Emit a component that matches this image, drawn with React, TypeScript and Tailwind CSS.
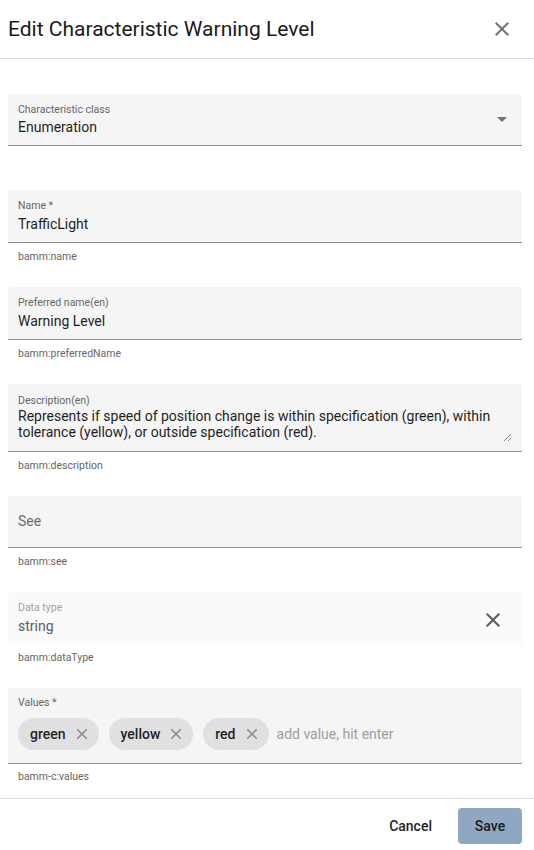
const CloseIcon = ({ className }: { className?: string }) => (
  <svg viewBox="0 0 24 24" className={className} fill="currentColor">
    <path d="M19 6.41 17.59 5 12 10.59 6.41 5 5 6.41 10.59 12 5 17.59 6.41 19 12 13.41 17.59 19 19 17.59 13.41 12z" />
  </svg>
)

function Hint({ text }: { text?: string }) {
  return (
    <div className="h-[44px] px-[10px] pt-[7px] text-[10.5px] leading-[14px] text-[#666]">
      {text}
    </div>
  )
}

function TextField({ label, value, hint }: { label: string; value: string; hint?: string }) {
  return (
    <div>
      <div className="h-[53px] rounded-t bg-[#f5f5f5] border-b border-[#8f8f8f] px-[10px] pt-[9px]">
        <div className="text-[10.5px] leading-[14px] text-[#666]">{label}</div>
        <div className="mt-[2px] text-[14px] leading-[18px] text-[#1f1f1f]">{value}</div>
      </div>
      <Hint text={hint} />
    </div>
  )
}

const chips = ["green", "yellow", "red"]

export default function App() {
  return (
    <div className="w-[534px] h-[850px] bg-white flex flex-col font-['Roboto',sans-serif] text-[#1f1f1f]">
      <div className="h-[59px] shrink-0 border-b border-[#dadada] flex items-center justify-between pl-2 pr-[20px]">
        <h1 className="text-[21px] leading-[24px] text-[#1a1a1a]">Edit Characteristic Warning Level</h1>
        <CloseIcon className="w-6 h-6 text-[#737373]" />
      </div>

      <div className="flex-1 pl-2 pr-3 pt-[35px]">
        {/* characteristic class select */}
        <div className="mb-[44px]">
          <div className="h-[52px] rounded-t bg-[#f5f5f5] border-b border-[#8f8f8f] px-[10px] pt-[9px] flex items-start justify-between">
            <div>
              <div className="text-[10.5px] leading-[14px] text-[#666]">Characteristic class</div>
              <div className="mt-[1px] text-[14px] leading-[18px]">Enumeration</div>
            </div>
            <svg viewBox="0 0 10 5" className="w-[10px] h-[5px] mt-[14px] mr-[5px] text-[#737373]" fill="currentColor">
              <path d="M0 0h10L5 5z" />
            </svg>
          </div>
        </div>

        <TextField label="Name *" value="TrafficLight" hint="bamm:name" />
        <TextField label="Preferred name(en)" value="Warning Level" hint="bamm:preferredName" />

        {/* description */}
        <div>
          <div className="relative h-[68px] rounded-t bg-[#f5f5f5] border-b border-[#8f8f8f] px-[10px] pt-[10px]">
            <div className="text-[10.5px] leading-[14px] text-[#666]">Description(en)</div>
            <div className="mt-[1px] text-[14px] leading-[15.75px] pr-2">
              Represents if speed of position change is within specification (green), within tolerance (yellow), or outside specification (red).
            </div>
            <svg viewBox="0 0 8 8" className="absolute right-[11px] bottom-[10px] w-[8px] h-[8px] text-[#777]" stroke="currentColor" strokeWidth="0.9">
              <path d="M1 8 8 1M5 8 8 5" />
            </svg>
          </div>
          <Hint text="bamm:description" />
        </div>

        {/* see */}
        <div>
          <div className="h-[52px] rounded-t bg-[#f5f5f5] border-b border-[#8f8f8f] px-[10px] flex items-center">
            <span className="text-[14px] text-[#6b6b6b]">See</span>
          </div>
          <Hint text="bamm:see" />
        </div>

        {/* data type (disabled) */}
        <div>
          <div className="h-[52px] rounded-t bg-[#fafafa] px-[10px] pt-[9px] flex items-start justify-between">
            <div>
              <div className="text-[10.5px] leading-[14px] text-[#a3a3a3]">Data type</div>
              <div className="mt-[2px] text-[14px] leading-[18px] text-[#5c5c5c]">string</div>
            </div>
            <CloseIcon className="w-6 h-6 mt-[7px] mr-[7px] text-[#5a5a5a]" />
          </div>
          <Hint text="bamm:dataType" />
        </div>

        {/* values chips */}
        <div>
          <div className="h-[76px] rounded-t bg-[#f5f5f5] border-b border-[#8f8f8f] px-[10px] pt-[8px]">
            <div className="text-[10.5px] leading-[14px] text-[#666]">Values *</div>
            <div className="mt-[8px] flex items-center gap-[10px]">
              {chips.map((c) => (
                <div key={c} className="h-[32px] rounded-full bg-[#e0e0e0] pl-[12px] pr-[8px] flex items-center gap-[7px]">
                  <span className="text-[14px] font-medium text-[#1f1f1f]">{c}</span>
                  <CloseIcon className="w-[18px] h-[18px] text-[#8a8a8a]" />
                </div>
              ))}
              <span className="-ml-[2px] text-[14px] text-[#9e9e9e]">add value, hit enter</span>
            </div>
          </div>
          <div className="px-[10px] pt-[6px] text-[10.5px] leading-[14px] text-[#666]">bamm-c:values</div>
        </div>
      </div>

      <div className="h-[52px] shrink-0 border-t border-[#dadada] flex items-center justify-end gap-[10px] pr-3 pt-[3px]">
        <button className="h-[36px] px-4 text-[14px] font-medium text-[#1f1f1f]">Cancel</button>
        <button className="h-[36px] w-[64px] rounded bg-[#8fa7c2] text-[14px] font-medium text-[#1a1a1a]">Save</button>
      </div>
    </div>
  )
}
